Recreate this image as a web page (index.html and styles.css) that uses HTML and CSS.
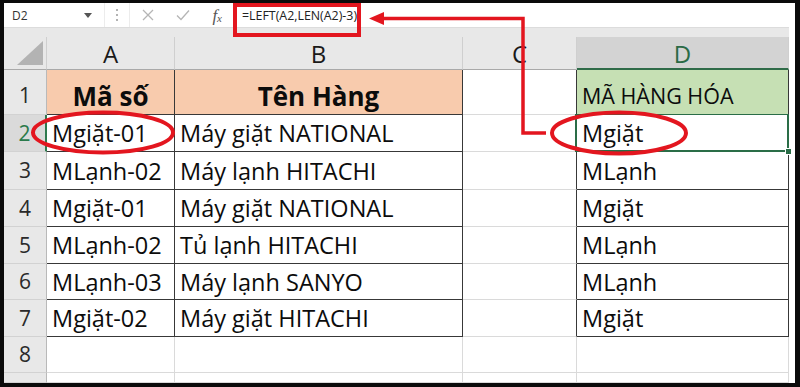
FILE: index.html
```html
<!DOCTYPE html>
<html lang="vi">
<head>
<meta charset="utf-8">
<title>Excel LEFT</title>
<link rel="stylesheet" href="styles.css">
</head>
<body>
<div class="frame">
  <div class="topbar">
    <div class="namebox"><span>D2</span><svg class="caret" width="8" height="5" viewBox="0 0 8 5"><path d="M0 0h8L4 5z" fill="#555"/></svg></div>
    <div class="dots"><svg width="4" height="14" viewBox="0 0 4 14"><circle cx="2" cy="2" r="1" fill="#9a9a9a"/><circle cx="2" cy="7" r="1" fill="#9a9a9a"/><circle cx="2" cy="12" r="1" fill="#9a9a9a"/></svg></div>
    <div class="btns">
      <svg width="12" height="12" viewBox="0 0 12 12"><path d="M1 1L11 11M11 1L1 11" stroke="#b5b5b5" stroke-width="1.3"/></svg>
      <svg width="14" height="12" viewBox="0 0 14 12"><path d="M1 6.5L5 10.5L13 1.5" stroke="#b5b5b5" stroke-width="1.3" fill="none"/></svg>
      <span class="fx">f<sub>x</sub></span>
    </div>
    <div class="formula">=LEFT(A2,LEN(A2)-3)</div>
  </div>

  <div class="sheet">
    <div class="strip"></div><div class="pad"></div>

    <div class="ch corner"><svg width="42" height="32" viewBox="0 0 42 32"><path d="M13 28H39V4z" fill="#b3b3b3"/></svg></div>
    <div class="ch">A</div>
    <div class="ch">B</div>
    <div class="ch">C</div>
    <div class="ch chsel">D</div>
    <div class="pad"></div>

    <div class="rh r1">1</div>
    <div class="c t hd r1">Mã số</div>
    <div class="c t hd r1">Tên Hàng</div>
    <div class="c cl r1"></div>
    <div class="c t hg r1">MÃ HÀNG HÓA</div>
    <div class="pad"></div>

    <div class="rh rhsel">2</div>
    <div class="c t">Mgiặt-01</div>
    <div class="c t">Máy giặt NATIONAL</div>
    <div class="c cl"></div>
    <div class="c t sel">Mgiặt</div>
    <div class="pad"></div>

    <div class="rh">3</div>
    <div class="c t">MLạnh-02</div>
    <div class="c t">Máy lạnh HITACHI</div>
    <div class="c cl"></div>
    <div class="c t">MLạnh</div>
    <div class="pad"></div>

    <div class="rh">4</div>
    <div class="c t">Mgiặt-01</div>
    <div class="c t">Máy giặt NATIONAL</div>
    <div class="c cl"></div>
    <div class="c t">Mgiặt</div>
    <div class="pad"></div>

    <div class="rh">5</div>
    <div class="c t">MLạnh-02</div>
    <div class="c t">Tủ lạnh HITACHI</div>
    <div class="c cl"></div>
    <div class="c t">MLạnh</div>
    <div class="pad"></div>

    <div class="rh">6</div>
    <div class="c t">MLạnh-03</div>
    <div class="c t">Máy lạnh SANYO</div>
    <div class="c cl"></div>
    <div class="c t">MLạnh</div>
    <div class="pad"></div>

    <div class="rh">7</div>
    <div class="c t">Mgiặt-02</div>
    <div class="c t">Máy giặt HITACHI</div>
    <div class="c cl"></div>
    <div class="c t">Mgiặt</div>
    <div class="pad"></div>

    <div class="rh">8</div>
    <div class="c"></div>
    <div class="c"></div>
    <div class="c"></div>
    <div class="c"></div>
    <div class="pad"></div>

    <div class="rh"></div>
    <div class="c"></div>
    <div class="c"></div>
    <div class="c"></div>
    <div class="c"></div>
    <div class="pad"></div>
  </div>

  <svg class="annot" width="800" height="387" viewBox="0 0 800 387">
    <rect x="235" y="5" width="124" height="30" fill="none" stroke="#e3161f" stroke-width="4"/>
    <path d="M546 133H523V18.5H380" fill="none" stroke="#e3161f" stroke-width="3.5"/>
    <path d="M369 18.5L384 12V25z" fill="#e3161f"/>
    <ellipse cx="103" cy="132.5" rx="70" ry="20" fill="none" stroke="#e3161f" stroke-width="4"/>
    <ellipse cx="619" cy="133" rx="67" ry="20.5" fill="none" stroke="#e3161f" stroke-width="4"/>
  </svg>
</div>
</body>
</html>
```

FILE: styles.css
```css
html, body {
  margin: 0;
  padding: 0;
}
body {
  width: 800px;
  height: 387px;
  overflow: hidden;
  background: #000;
  font-family: "Open Sans", "Noto Sans", sans-serif;
  color: #111;
}
.frame {
  position: relative;
  box-sizing: border-box;
  width: 800px;
  height: 387px;
  border-style: solid;
  border-color: #0b0b0b;
  border-width: 3px 5px 4px 4px;
  background: #fff;
  overflow: hidden;
}
.topbar {
  height: 24px;
  display: flex;
  align-items: center;
  background: #fff;
}
.namebox {
  width: 100px;
  height: 24px;
  box-sizing: border-box;
  display: flex;
  align-items: center;
  justify-content: space-between;
  padding: 0 12px 0 8px;
  font-size: 12px;
  color: #333;
}
.dots {
  width: 26px;
  height: 24px;
  display: flex;
  align-items: center;
  justify-content: center;
  border-left: 1px solid #ececec;
  border-right: 1px solid #ececec;
  box-sizing: border-box;
}
.btns {
  width: 104px;
  height: 24px;
  display: flex;
  align-items: center;
  justify-content: space-between;
  padding: 0 12px 0 12px;
  box-sizing: border-box;
}
.fx {
  font-family: "Liberation Serif", serif;
  font-style: italic;
  font-size: 17px;
  color: #555;
  line-height: 1;
}
.fx sub {
  font-size: 11px;
  vertical-align: -1px;
}
.formula {
  flex: 1;
  height: 24px;
  display: flex;
  align-items: center;
  padding-left: 8px;
  font-size: 12.4px;
  color: #222;
}
.sheet {
  display: grid;
  grid-template-columns: 43px 128px 288px 114px 212px 6px;
  grid-template-rows: 10px 33px 45px 37px 38px 37px 37px 36px 37px 36px 10px;
}
.sheet > div {
  box-sizing: border-box;
}
.strip {
  grid-column: 1 / 6;
  background: #e8e8e8;
  border-top: 1px solid #dcdcdc;
}
.pad {
  background: #fff;
}
.ch {
  background: #e8e8e8;
  border-right: 1px solid #cfcfcf;
  border-bottom: 1px solid #a9a9a9;
  display: flex;
  align-items: center;
  justify-content: center;
  padding-top: 2px;
  font-size: 24px;
  color: #1a1a1a;
  line-height: 1;
}
.corner {
  align-items: flex-start;
  justify-content: flex-start;
  padding-top: 0;
}
.corner svg {
  display: block;
}
.chsel {
  background: #d3d3d3;
  color: #2a6a45;
  border-bottom: 2px solid #2f6b48;
}
.rh {
  background: #e8e8e8;
  border-right: 1px solid #b9b9b9;
  border-bottom: 1px solid #d2d2d2;
  display: flex;
  align-items: center;
  justify-content: center;
  font-size: 21px;
  color: #2a2a2a;
  line-height: 1;
}
.rh.r1 {
  padding-top: 6px;
}
.rhsel {
  background: #dadada;
  color: #2a7a4b;
  border-right: 2px solid #2f7a4e;
}
.c {
  border-right: 1px solid #dadada;
  border-bottom: 1px solid #dadada;
  display: flex;
  align-items: center;
  padding-left: 5px;
  padding-top: 2px;
  font-size: 23.5px;
  line-height: 1;
  white-space: nowrap;
  color: #0c0c0c;
}
.c.t {
  border-right-color: #383838;
  border-bottom-color: #383838;
}
.c.cl {
  border-right-color: #383838;
}
.c.r1 {
  padding-top: 8px;
}
.hd {
  background: #f8cbad;
  font-weight: 700;
  font-size: 26px;
  justify-content: center;
  padding-left: 0;
}
.hg {
  background: #c6e0b4;
  font-size: 21.5px;
}
.sel {
  position: relative;
}
.sel::after {
  content: "";
  position: absolute;
  left: -2px;
  top: -1px;
  right: -1px;
  bottom: -1px;
  border: 2px solid #2a6d47;
  border-top-width: 1px;
}
.sel::before {
  content: "";
  position: absolute;
  right: -4px;
  bottom: -4px;
  width: 5px;
  height: 5px;
  background: #2a6d47;
  border: 1px solid #fff;
  z-index: 2;
}
.annot {
  position: absolute;
  left: -4px;
  top: -3px;
  pointer-events: none;
}
```
